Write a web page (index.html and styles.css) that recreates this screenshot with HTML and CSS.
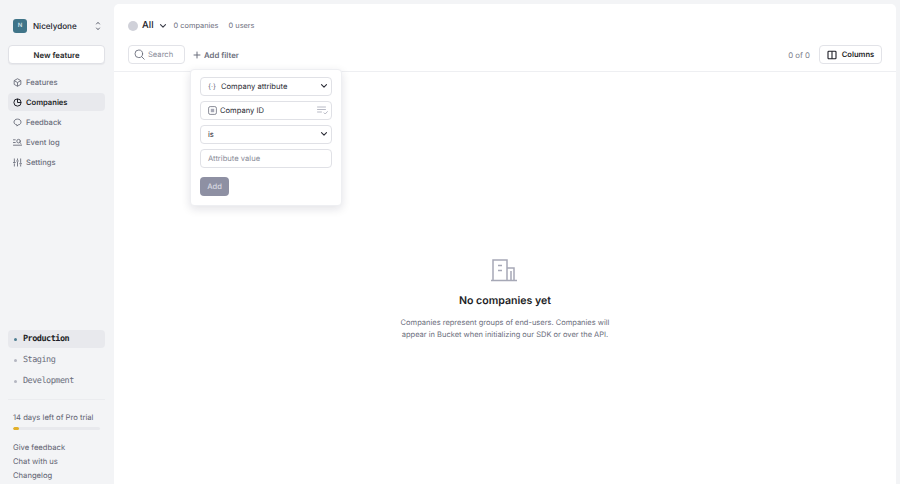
FILE: index.html
```html
<!DOCTYPE html>
<html lang="en">
<head>
<meta charset="utf-8">
<title>Companies</title>
<link rel="stylesheet" href="styles.css">
</head>
<body>
<div class="app">
  <aside class="sidebar">
    <div class="org">
      <span class="org-logo">N</span>
      <span class="org-name">Nicelydone</span>
      <svg class="org-chevrons" width="8" height="12" viewBox="0 0 8 12" fill="none" stroke="#5f6270" stroke-width="1" stroke-linecap="round" stroke-linejoin="round"><path d="M2.500 4l1.500-1.700L5.500 4M2.500 8l1.500 1.700L5.500 8"/></svg>
    </div>
    <button class="new-feature">New feature</button>
    <nav class="nav">
      <a class="nav-item"><svg width="9" height="9" viewBox="0 0 10 10" fill="none" stroke="#6b6e7c" stroke-width="1" stroke-linejoin="round"><path d="M5 .8l3.700 2.100v4.200L5 9.200 1.300 7.100V2.900zM1.300 2.900L5 5l3.700-2.100M5 5v4.200"/></svg>Features</a>
      <a class="nav-item active"><svg width="9" height="9" viewBox="0 0 10 10" fill="none" stroke="#1d1e26" stroke-width="1.100"><circle cx="5" cy="5" r="4"/><path d="M5 1v4h4"/></svg>Companies</a>
      <a class="nav-item"><svg width="9" height="9" viewBox="0 0 10 10" fill="none" stroke="#6b6e7c" stroke-width="1" stroke-linejoin="round"><path d="M5 1.200c2.300 0 3.900 1.400 3.900 3.300S7.300 7.700 5.600 7.700L4.400 9V7.600C2.300 7.300 1.100 6.200 1.100 4.500 1.100 2.600 2.700 1.200 5 1.200z"/></svg>Feedback</a>
      <a class="nav-item"><svg width="9" height="9" viewBox="0 0 10 10" fill="none" stroke="#6b6e7c" stroke-width="1" stroke-linecap="round"><circle cx="6.200" cy="3.500" r="2"/><path d="M.5 2h2M.5 5h2M.5 8h9M7.600 5l1.400 1.300"/></svg>Event log</a>
      <a class="nav-item"><svg width="9" height="9" viewBox="0 0 10 10" fill="none" stroke="#6b6e7c" stroke-width="1" stroke-linecap="round"><path d="M1.500 1v3M1.500 6.500V9M5 1v1M5 4.500V9M8.500 1v4M8.500 7.500V9M.5 5h2M4 3.300h2M7.500 6.300h2"/></svg>Settings</a>
    </nav>
    <div class="spacer"></div>
    <ul class="envs">
      <li class="env active"><span class="env-dot"></span>Production</li>
      <li class="env"><span class="env-dot"></span>Staging</li>
      <li class="env"><span class="env-dot"></span>Development</li>
    </ul>
    <div class="trial">
      <div class="trial-text">14 days left of Pro trial</div>
      <div class="trial-track"><div class="trial-fill"></div></div>
    </div>
    <div class="links">
      <a>Give feedback</a>
      <a>Chat with us</a>
      <a>Changelog</a>
    </div>
  </aside>
  <main class="main">
    <header class="head">
      <div class="title-row">
        <span class="seg-dot"></span>
        <span class="seg-name">All</span>
        <svg class="seg-chevron" width="8" height="6" viewBox="0 0 8 6" fill="none" stroke="#3a3c48" stroke-width="1.100" stroke-linecap="round" stroke-linejoin="round"><path d="M1.500 1.700L4 4.200l2.500-2.500"/></svg>
        <span class="stat stat-first">0 companies</span>
        <span class="stat">0 users</span>
      </div>
      <div class="toolbar">
        <div class="search">
          <svg width="11" height="11" viewBox="0 0 11 11" fill="none" stroke="#6b6e7c" stroke-width=".9" stroke-linecap="round"><circle cx="4.800" cy="4.800" r="3.800"/><path d="M7.600 7.600l2.600 2.600"/></svg>
          <span>Search</span>
        </div>
        <button class="add-filter"><svg width="8" height="8" viewBox="0 0 8 8" fill="none" stroke="#6b6e7c" stroke-width="1" stroke-linecap="round"><path d="M4 1v6M1 4h6"/></svg>Add filter</button>
        <div class="toolbar-gap"></div>
        <span class="count">0 of 0</span>
        <button class="columns"><svg width="10" height="10" viewBox="0 0 10 10" fill="none" stroke="#1d1e26" stroke-width="1.100"><rect x="1" y="1.200" width="8" height="7.600" rx=".8"/><path d="M5 1.200v7.600"/></svg>Columns</button>
      </div>
    </header>
    <section class="empty">
      <svg width="28" height="24" viewBox="0 0 28 24" fill="none" stroke="#a6a8b6" stroke-width="1.500"><path d="M2 22V2h14v20M16 10h7v12M0 22.500h26M7 7.500h4M7 12.500h4M20 13v9"/></svg>
      <h2 class="empty-title">No companies yet</h2>
      <p class="empty-text">Companies represent groups of end-users. Companies will appear in Bucket when initializing our SDK or over the API.</p>
    </section>
    <div class="popover">
      <div class="field">
        <span class="attr-icon">{&#183;}</span>
        <span class="field-label">Company attribute</span>
        <svg class="chev" width="8" height="6" viewBox="0 0 8 6" fill="none" stroke="#2b2c36" stroke-width="1.100" stroke-linecap="round" stroke-linejoin="round"><path d="M1.500 1.700L4 4.200l2.500-2.500"/></svg>
      </div>
      <div class="field field-id">
        <svg width="9" height="9" viewBox="0 0 9 9" fill="none" stroke="#6b6e7c" stroke-width=".8"><rect x=".6" y=".6" width="7.800" height="7.800" rx="1.600"/><rect x="2.800" y="2.800" width="3.400" height="3.400" fill="#a6a8b6" stroke="none"/></svg>
        <span class="field-label">Company ID</span>
        <svg class="chev-list" width="11" height="9" viewBox="0 0 11 9" fill="none" stroke="#a6a8b6" stroke-width=".8" stroke-linecap="round"><path d="M.5 1h8M.5 3.500h8M.5 6h4M7 6.800l1.200 1.200 2.200-2.400"/></svg>
      </div>
      <div class="field">
        <span class="field-label">is</span>
        <svg class="chev" width="8" height="6" viewBox="0 0 8 6" fill="none" stroke="#2b2c36" stroke-width="1.100" stroke-linecap="round" stroke-linejoin="round"><path d="M1.500 1.700L4 4.200l2.500-2.500"/></svg>
      </div>
      <div class="field field-input">Attribute value</div>
      <button class="add-btn">Add</button>
    </div>
  </main>
</div>
</body>
</html>
```
FILE: styles.css
```css
* { box-sizing: border-box; }
html, body { margin: 0; height: 100%; }
body {
  font-family: Inter, "Liberation Sans", sans-serif;
  background: #f3f4f6;
  color: #1d1e26;
  overflow: hidden;
  text-rendering: geometricPrecision;
}
button { font-family: inherit; cursor: pointer; text-rendering: geometricPrecision; }
.app { display: flex; width: 900px; height: 484px; }

.sidebar {
  width: 114px;
  flex: none;
  display: flex;
  flex-direction: column;
  padding: 0 9px 0 8px;
  height: 484px;
}
.org {
  display: flex;
  align-items: center;
  height: 25px;
  margin-top: 13px;
  padding-left: 5px;
}
.org-logo {
  width: 14px;
  height: 14px;
  border-radius: 3px;
  background: #3f7488;
  color: #cfe2ea;
  font-size: 6px;
  font-weight: 600;
  display: flex;
  align-items: center;
  justify-content: center;
}
.org-name { margin-left: 6px; font-size: 8.100px; font-weight: 500; color: #22232c; }
.org-chevrons { margin-left: auto; margin-right: 3px; }
.new-feature {
  margin-top: 7px;
  height: 19px;
  width: 97px;
  background: #fff;
  border: 1px solid #e0e1e6;
  border-radius: 4px;
  font-size: 7.800px;
  font-weight: 600;
  color: #1d1e26;
  padding: 0;
  box-shadow: 0 1px 1px rgba(20, 20, 40, .05);
}
.nav { display: flex; flex-direction: column; gap: 2px; margin-top: 9px; }
.nav-item {
  height: 18px;
  display: flex;
  align-items: center;
  gap: 4px;
  padding-left: 5px;
  border-radius: 4px;
  font-size: 7.600px;
  font-weight: 500;
  color: #6b6e7c;
}
.nav-item.active { background: #e8e9ed; color: #1d1e26; font-weight: 600; }
.spacer { flex: 1; }

.envs { list-style: none; margin: 0; padding: 0 0 9px; display: flex; flex-direction: column; gap: 3px; border-bottom: 1px solid #ebecef; }
.env {
  height: 18px;
  display: flex;
  align-items: center;
  padding-left: 6px;
  gap: 6px;
  border-radius: 4px;
  font-family: "DejaVu Sans Mono", monospace;
  font-size: 8.500px;
  letter-spacing: -.5px;
  color: #6b6e7c;
}
.env-dot { width: 3px; height: 3px; border-radius: 50%; background: #b4b6c1; flex: none; }
.env.active { background: #e8e9ed; color: #1d1e26; font-weight: 700; }
.env.active .env-dot { background: #4f7f92; }

.trial { padding: 12px 5px 2px; }
.trial-text { font-size: 7.650px; line-height: 11px; color: #5f6270; white-space: nowrap; }
.trial-track { margin-top: 4px; height: 3px; width: 87px; border-radius: 2px; background: #e8e9ed; overflow: hidden; }
.trial-fill { width: 6px; height: 100%; background: #e2b02a; border-radius: 2px; }
.links { padding: 9px 5px 0; display: flex; flex-direction: column; font-size: 7.650px; line-height: 14px; color: #5f6270; height: 52px; }

.main {
  position: relative;
  flex: none;
  width: 782px;
  height: 480px;
  margin-top: 4px;
  background: #fff;
  border-radius: 5px 5px 0 0;
}
.head { border-bottom: 1px solid #eeeff2; height: 68px; padding: 0 14px; }
.title-row { display: flex; align-items: center; height: 41px; padding-top: 2px; }
.seg-dot { width: 10px; height: 10px; border-radius: 50%; background: #d0d1d9; }
.seg-name { margin-left: 4px; font-size: 9.500px; font-weight: 500; color: #22232c; }
.seg-chevron { margin-left: 5px; }
.stat { font-size: 7.400px; color: #6b6e7c; margin-left: 10px; }
.stat-first { margin-left: 7px; }
.toolbar { display: flex; align-items: center; height: 19px; }
.search {
  width: 57px;
  height: 19px;
  display: flex;
  align-items: center;
  gap: 3px;
  padding-left: 5px;
  border: 1px solid #e2e3e8;
  border-radius: 4px;
  font-size: 7.600px;
  color: #8a8c99;
}
.add-filter {
  display: flex;
  align-items: center;
  gap: 3px;
  margin-left: 8px;
  padding: 0;
  border: 0;
  background: none;
  font-size: 7.800px;
  font-weight: 600;
  color: #6b6e7c;
}
.toolbar-gap { flex: 1; }
.count { font-size: 7.800px; color: #7b7d8a; }
.columns {
  margin-left: 9px;
  width: 63px;
  height: 19px;
  display: flex;
  align-items: center;
  justify-content: center;
  gap: 5px;
  padding: 0;
  background: #fff;
  border: 1px solid #e2e3e8;
  border-radius: 4px;
  font-size: 7.600px;
  font-weight: 600;
  color: #1d1e26;
}

.empty {
  display: flex;
  flex-direction: column;
  align-items: center;
  padding-top: 186px;
}
.empty-title { margin: 11px 0 0; font-size: 10.600px; line-height: 16px; font-weight: 600; color: #1d1e26; }
.empty-text {
  margin: 8px 0 0;
  width: 220px;
  text-align: center;
  font-size: 7.500px;
  line-height: 12px;
  color: #6b6e7c;
}

.popover {
  position: absolute;
  left: 76px;
  top: 65px;
  width: 152px;
  height: 137px;
  padding: 6.500px 9px;
  background: #fff;
  border-radius: 4px;
  border: 1px solid #eeeff2;
  box-shadow: 0 3px 10px rgba(20, 20, 50, .12);
  display: flex;
  flex-direction: column;
  gap: 5px;
}
.field {
  height: 19px;
  flex: none;
  display: flex;
  align-items: center;
  padding: 0 3px 0 7px;
  border: 1px solid #e0e1e6;
  border-radius: 4px;
  font-size: 7.600px;
  color: #2b2c36;
  gap: 4px;
}
.attr-icon { font-size: 7px; color: #6b6e7c; margin-right: 1px; }
.field-label { flex: 1; }
.field-id { gap: 3px; }
.field-input { color: #8a8c99; }
.add-btn {
  margin-top: 4px;
  width: 29px;
  height: 19px;
  flex: none;
  border: 0;
  border-radius: 4px;
  background: #8e90a3;
  color: #d8d9e2;
  font-size: 7.600px;
  font-weight: 500;
  padding: 0;
}
```
